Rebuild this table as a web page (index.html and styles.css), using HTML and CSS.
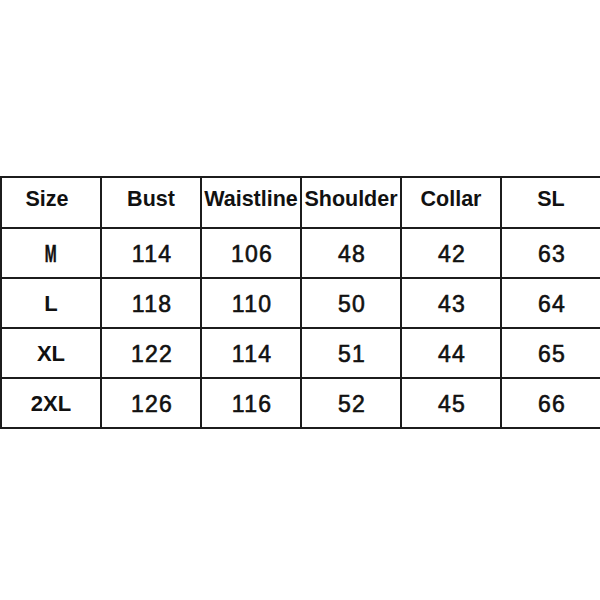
FILE: index.html
```html
<!DOCTYPE html>
<html>
<head>
<meta charset="utf-8">
<link rel="stylesheet" href="styles.css">
</head>
<body>
<div class="page">
  <div class="table">
    <div class="cell head first">Size</div>
    <div class="cell head">Bust</div>
    <div class="cell head">Waistline</div>
    <div class="cell head">Shoulder</div>
    <div class="cell head">Collar</div>
    <div class="cell head">SL</div>

    <div class="cell size"><span class="narrow">M</span></div>
    <div class="cell">114</div>
    <div class="cell">106</div>
    <div class="cell">48</div>
    <div class="cell">42</div>
    <div class="cell">63</div>

    <div class="cell size">L</div>
    <div class="cell">118</div>
    <div class="cell">110</div>
    <div class="cell">50</div>
    <div class="cell">43</div>
    <div class="cell">64</div>

    <div class="cell size">XL</div>
    <div class="cell">122</div>
    <div class="cell">114</div>
    <div class="cell">51</div>
    <div class="cell">44</div>
    <div class="cell">65</div>

    <div class="cell size">2XL</div>
    <div class="cell">126</div>
    <div class="cell">116</div>
    <div class="cell">52</div>
    <div class="cell">45</div>
    <div class="cell">66</div>
  </div>
</div>
</body>
</html>
```

FILE: styles.css
```css
html, body {
  margin: 0;
  padding: 0;
  background: #ffffff;
  overflow: hidden;
}

.page {
  width: 600px;
  height: 600px;
  padding-top: 176px;
  box-sizing: border-box;
  overflow: hidden;
}

.table {
  display: grid;
  grid-template-columns: repeat(6, 100px);
  grid-template-rows: 51px repeat(4, 50px);
  width: 602px;
  border-top: 2px solid #1c1c1c;
  border-left: 2px solid #1c1c1c;
  font-family: "Liberation Sans", Arial, sans-serif;
  color: #111;
}

.cell {
  display: flex;
  align-items: center;
  justify-content: center;
  border-right: 2px solid #1c1c1c;
  border-bottom: 2px solid #1c1c1c;
  font-size: 23px;
  letter-spacing: 1.2px;
  -webkit-text-stroke: 0.6px #111;
  white-space: nowrap;
  padding-top: 2px;
  padding-left: 2px;
  box-sizing: border-box;
}

.head {
  font-size: 21.5px;
  font-weight: bold;
  letter-spacing: 0;
  -webkit-text-stroke: 0;
  padding-top: 0;
  padding-left: 0;
  padding-bottom: 6px;
}

.first {
  padding-right: 8px;
}

.size {
  font-weight: bold;
  font-size: 22px;
  letter-spacing: 0;
  -webkit-text-stroke: 0;
  padding-left: 0;
}

.narrow {
  display: inline-block;
  font-size: 23px;
  transform: scaleX(0.62);
  -webkit-text-stroke: 0.5px #111;
}
```
